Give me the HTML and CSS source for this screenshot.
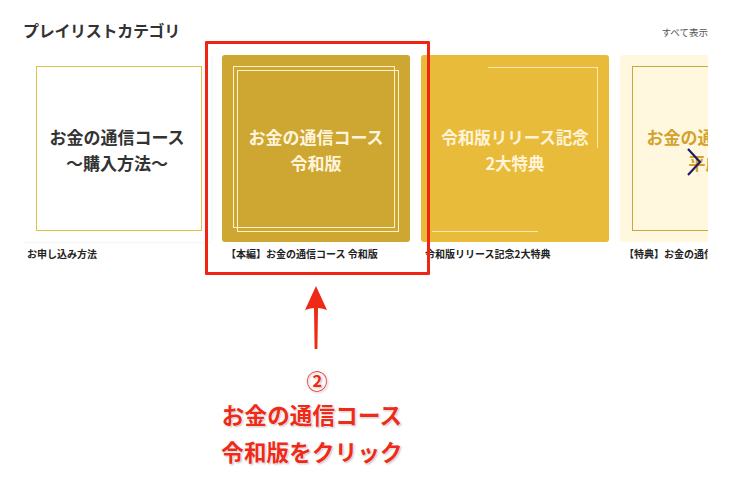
FILE: index.html
```html
<!DOCTYPE html>
<html lang="ja">
<head>
<meta charset="utf-8">
<link rel="stylesheet" href="styles.css">
</head>
<body>
<div class="page">
  <section class="playlists">
    <header class="head">
      <h2 class="title">プレイリストカテゴリ</h2>
      <a class="more">すべて表示</a>
    </header>
    <div class="viewport">
      <div class="track">
        <div class="item">
          <div class="card card-white">
            <span class="frame frame-white"></span>
            <p class="card-text">お金の通信コース<br>〜購入方法〜</p>
          </div>
          <p class="caption">お申し込み方法</p>
        </div>
        <div class="item">
          <div class="card card-gold">
            <span class="frame frame-a"></span>
            <span class="frame frame-b"></span>
            <p class="card-text">お金の通信コース<br>令和版</p>
          </div>
          <p class="caption">【本編】お金の通信コース 令和版</p>
        </div>
        <div class="item">
          <div class="card card-yellow">
            <span class="line line-top"></span>
            <span class="line line-right"></span>
            <span class="line line-bottom"></span>
            <p class="card-text">令和版リリース記念<br>2大特典</p>
          </div>
          <p class="caption">令和版リリース記念2大特典</p>
        </div>
        <div class="item">
          <div class="card card-cream">
            <span class="frame frame-cream"></span>
            <p class="card-text">お金の通信コース<br>平成版</p>
          </div>
          <p class="caption">【特典】お金の通信コース 平成版</p>
        </div>
      </div>
      <svg class="next" width="18" height="30" viewBox="0 0 18 30"><path d="M3 2 L15 15 L3 28" fill="none" stroke="#1c1a6b" stroke-width="2.2"/></svg>
    </div>
  </section>

  <div class="highlight"></div>
  <svg class="arrow" width="32" height="68" viewBox="0 0 32 68">
    <path d="M16 2 L27 26 Q21 24 18 24 L17.4 65 L14.6 65 L14 24 Q11 24 5 26 Z" fill="#ee2a17"/>
  </svg>
  <div class="note">
    <p class="note-num">②</p>
    <p class="note-line">お金の通信コース</p>
    <p class="note-line">令和版をクリック</p>
  </div>
</div>
</body>
</html>
```

FILE: styles.css
```css
* { box-sizing: border-box; }
html, body { margin: 0; padding: 0; background: #fff; }
body {
  font-family: "Noto Sans CJK JP", "Noto Sans", sans-serif;
  color: #333;
  width: 731px;
  height: 488px;
  overflow: hidden;
}
.page { position: relative; width: 731px; height: 488px; }
.playlists { padding: 19px 23px 0 23px; }
.head {
  display: flex;
  justify-content: space-between;
  align-items: flex-end;
  height: 22px;
}
.title {
  margin: 0;
  font-size: 16px;
  line-height: 22px;
  font-weight: 700;
  color: #333;
  letter-spacing: -0.3px;
}
.more {
  font-size: 9.5px;
  line-height: 14px;
  color: #555;
  position: relative;
  top: -2px;
}
.viewport {
  position: relative;
  margin-top: 14px;
  width: 685px;
  overflow: hidden;
}
.track { display: flex; gap: 11px; width: max-content; }
.item { width: 188px; flex: none; }
.card {
  position: relative;
  width: 188px;
  height: 187px;
  border-radius: 3px;
  display: flex;
  align-items: center;
  justify-content: center;
}
.card-text {
  margin: 0;
  text-align: center;
  font-size: 17px;
  line-height: 26px;
  font-weight: 700;
  position: relative;
  top: 1px;
}
.card-white { background: #fff; box-shadow: 0 0 3px rgba(0,0,0,0.10); border-radius: 2px; }
.card-white .card-text { color: #333; }
.card-gold { background: #cea632; }
.card-gold .card-text { color: #fff5dc; }
.card-yellow { background: #e9bb3a; }
.card-yellow .card-text { color: #fff4d8; font-size: 16.5px; }
.card-cream { background: #fff8de; }
.card-cream .card-text { color: #d2a22c; }

.frame { position: absolute; display: block; }
.frame-white { left: 13px; top: 11px; width: 166px; height: 165px; border: 1.5px solid #d9c448; }
.frame-a { left: 11px; top: 11px; width: 162px; height: 162px; border: 1.5px solid #fff1cc; }
.frame-b { left: 15px; top: 15px; width: 162px; height: 162px; border: 1.5px solid #fff1cc; }
.frame-cream { left: 12px; top: 11px; width: 166px; height: 165px; border: 1.5px solid #c9a640; }

.line { position: absolute; display: block; background: rgba(255,245,215,0.75); }
.line-top { left: 67px; top: 12px; width: 110px; height: 1px; }
.line-right { left: 176px; top: 12px; width: 1px; height: 81px; }
.line-bottom { left: 11px; top: 176px; width: 106px; height: 1px; }

.caption {
  margin: 5px 0 0 0;
  padding-left: 4px;
  font-size: 10px;
  line-height: 14px;
  font-weight: 700;
  color: #222;
  white-space: nowrap;
}
.next { position: absolute; left: 662px; top: 92px; }

.highlight {
  position: absolute;
  left: 205px;
  top: 41px;
  width: 225px;
  height: 234px;
  border: 3px solid #ef2413;
  border-radius: 1px;
}
.arrow { position: absolute; left: 300px; top: 284px; }
.note {
  position: absolute;
  left: 207px;
  top: 364px;
  width: 210px;
  text-align: center;
  color: #ef2a18;
  font-weight: 700;
  text-shadow: 0 0 2px #fff, 0 0 2px #fff, 1px 1px 2px rgba(0,0,0,0.35);
}
.note p { margin: 0; }
.note-num { font-size: 21px; line-height: 32px; position: relative; left: 5px; }
.note-line { font-size: 22.5px; line-height: 37px; letter-spacing: 0.2px; }
```
